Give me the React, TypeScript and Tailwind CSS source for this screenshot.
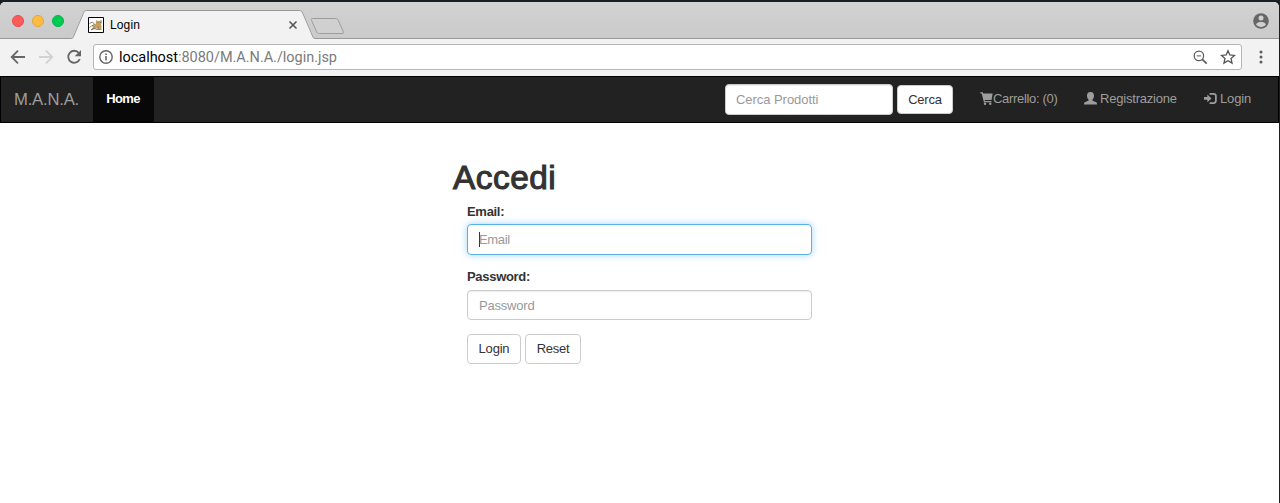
import React from "react";

function BrowserTabs() {
  return (
    <div className="relative h-[37px] w-full shrink-0 overflow-hidden rounded-t-[5px] bg-linear-to-b from-[#d2d2d2] to-[#cacaca]">
      <svg className="absolute inset-0" width="1280" height="37" viewBox="0 2 1280 37" fill="none">
        <path d="M0 38.5H71.5C73 38.5 73.5 37 74.3 35L83 14.5C84.3 11 84.8 10.5 86.5 10.5H299.5C301 10.5 301.8 11.4 302.6 13L312 35C313 37.4 313.5 38.5 315 38.5H1280V40H0Z" fill="none" stroke="#999" />
        <path d="M72 39C73.5 38.5 74 37 74.8 35L83.5 14.5C84.5 11.5 85 11 86.5 11H299.5C301 11 301.5 12 302.2 13.2L311.6 35.2C312.7 37.8 313 39 315 39Z" fill="#f2f2f2" />
        <path d="M312.3 18.5H335.5C337 18.5 337.6 19 338.2 20.2L343.1 31.2C343.9 33 343.5 33.5 342 33.5H319.5C317.8 33.5 317.1 33 316.4 31.4L311.6 20.5C311 19.2 311.2 18.5 312.3 18.5Z" fill="#d0d0d0" stroke="#9d9d9d" />
      </svg>
      <div className="relative flex h-full items-center pl-3">
        <div className="flex gap-2">
          <span className="size-3 rounded-full border-[0.5px] border-[#e94b4a] bg-[#fc5b57]" />
          <span className="size-3 rounded-full border-[0.5px] border-[#e5a63a] bg-[#fdbc40]" />
          <span className="size-3 rounded-full border-[0.5px] border-[#00b844] bg-[#00ca4f]" />
        </div>
        <svg className="mt-[9px] ml-[24px]" width="16" height="16" viewBox="0 0 16 16">
          <path d="M.5.5h15v15H.5z" fill="#fff" stroke="#000" />
          <path d="M7.500 7 8.300 3l1.500 1 2-.2 1.700-1 .4 2.700-1 2 .8 1.700-.5 2.800h-3L8 11.500 5 13H2.500L5 10.500l-1-2z" fill="#c5a062" />
          <path d="M1.500 6.500 4.500 5l2 2.500L3.500 9l-2 1.500M3 13l3-2 2.500 1.500h5M9.500 5.500h1M12 5.500h1M9.500 10l1.500 1" fill="none" stroke="#6f6a62" strokeWidth=".8" />
        </svg>
        <span className="mt-[9px] ml-[6px] w-[176px] text-[12px] tracking-[0.12px] text-black">Login</span>
        <svg className="mt-[9px] ml-[2px]" width="10" height="10" viewBox="0 0 10 10">
          <path d="m1.500 1.500 7 7m0-7-7 7" stroke="#555" strokeWidth="1.600" />
        </svg>
      </div>
      <svg className="absolute top-[11px] left-[1253px]" width="16" height="16" viewBox="0 0 16 16">
        <circle cx="8" cy="8" r="7.800" fill="#666" />
        <circle cx="8" cy="5" r="2.500" fill="#d0d0d0" />
        <path d="M3 11.500C4 9.200 6 8.900 8 8.900s4 .3 5 2.600C11.900 13.100 10 14 8 14s-3.900-.9-5-2.500Z" fill="#d0d0d0" />
      </svg>
    </div>
  );
}

function Toolbar() {
  return (
    <div className="flex h-[37px] w-full shrink-0 items-center bg-[#f2f2f2] pb-px pl-[10px] font-['Roboto',sans-serif]">
      <svg width="16" height="16" viewBox="0 0 16 16" fill="none" stroke="#666" strokeWidth="1.800">
        <path d="M15 8H2M8 1.700 1.700 8 8 14.300" />
      </svg>
      <svg className="ml-3" width="16" height="16" viewBox="0 0 16 16" fill="none" stroke="#d2d2d2" strokeWidth="1.800">
        <path d="M1 8h13M8 1.700 14.300 8 8 14.300" />
      </svg>
      <svg className="ml-3" width="16" height="16" viewBox="0 0 16 16">
        <path d="M12.900 4A6 6 0 1 0 13.800 10" fill="none" stroke="#666" strokeWidth="1.800" />
        <path d="M15 1v6.300H8.700Z" fill="#666" />
      </svg>
      <div className="ml-[11px] flex h-[26px] w-[1149px] items-center rounded-[3px] border border-[#b5b5b5] bg-white">
        <svg className="ml-[5px]" width="14" height="14" viewBox="0 0 14 14">
          <circle cx="7" cy="7" r="6.200" fill="none" stroke="#666" strokeWidth="1.400" />
          <path d="M6.200 6h1.600v4.500H6.200zM6.200 3.400h1.600V5H6.200z" fill="#666" />
        </svg>
        <span className="ml-[6px] pt-[2px] text-[14.5px] tracking-[-0.03px] whitespace-nowrap text-[#7b7b7b]">
          <span className="text-black">localhost</span>:8080/M.A.N.A./login.jsp
        </span>
        <svg className="mr-[12px] ml-auto" width="15" height="15" viewBox="0 0 15 15" fill="none" stroke="#5d5d5d">
          <circle cx="5.900" cy="5.900" r="4.700" strokeWidth="1.300" />
          <path d="M3.700 5.900h4.400" strokeWidth="1" />
          <path d="m9.300 9.300 4.400 4.400" strokeWidth="1.700" />
        </svg>
        <svg className="mr-[5px]" width="16" height="16" viewBox="0 0 15 15" fill="none">
          <path d="m7.500 1.600 1.700 4 4.400.4-3.300 2.900 1 4.300-3.800-2.300-3.800 2.300 1-4.300L1.400 6l4.400-.4Z" stroke="#555" strokeWidth="1.200" />
        </svg>
      </div>
      <svg className="ml-[17px]" width="4" height="14" viewBox="0 0 4 14" fill="#5c5c5c">
        <circle cx="2" cy="2" r="1.500" />
        <circle cx="2" cy="7" r="1.500" />
        <circle cx="2" cy="12" r="1.500" />
      </svg>
    </div>
  );
}

function Navbar() {
  return (
    <nav className="flex h-[47px] w-full shrink-0 border border-black bg-[#222] text-[13px] text-[#9d9d9d]">
      <a className="flex w-[92px] items-center pl-[13px] text-[16.7px] tracking-[-0.22px]">
        <span>M.A.N.A.</span>
      </a>
      <a className="flex w-[61px] items-center justify-center bg-[#080808] font-bold tracking-[-0.6px] text-white">
        <span className="-mt-px -ml-px">Home</span>
      </a>
      <form className="ml-[571px] flex gap-1 pt-[7px]" onSubmit={(e) => e.preventDefault()}>
        <input
          className="h-[31px] w-[168px] rounded-[4px] border border-[#ccc] bg-white px-[10px] text-[13px] tracking-[-0.05px] shadow-[inset_0_1px_1px_rgba(0,0,0,0.075)] placeholder:text-[#999]"
          placeholder="Cerca Prodotti"
        />
        <button className="mt-px h-[29px] w-[56px] rounded-[4px] border border-[#ccc] bg-white tracking-[-0.2px] text-[#333]">Cerca</button>
      </form>
      <a className="ml-[27px] flex w-[77px] items-center pb-px">
        <svg className="mb-[2px] shrink-0" width="13" height="13" viewBox="0 0 13 13" fill="#9d9d9d">
          <path d="M.3.300h2.500l.5 1.300h9.400l-1.200 6.300H4.600l.3 1h6.500v1.300H3.900L1.700 1.600H.3Z" />
          <circle cx="5" cy="11.700" r="1.200" />
          <circle cx="10.300" cy="11.700" r="1.200" />
        </svg>
        <span className="tracking-[-0.32px] whitespace-nowrap">Carrello: (0)</span>
      </a>
      <a className="ml-[27px] flex w-[93px] items-center pb-px">
        <svg className="mb-[2px] shrink-0" width="13" height="13" viewBox="0 0 13 13" fill="#9d9d9d">
          <path d="M6.500 0C9 0 10 1.500 10 3.700c0 1.700-.7 3-1.600 3.900v1c1.200.7 3.100 1.200 4.100 1.900.5.400.5.900.5 2H0c0-1.100 0-1.600.5-2 1-.7 2.900-1.200 4.100-1.900v-1C3.700 6.700 3 5.400 3 3.700 3 1.500 4 0 6.500 0Z" />
        </svg>
        <span className="ml-[3px] tracking-[-0.2px] whitespace-nowrap">Registrazione</span>
      </a>
      <a className="ml-[27px] flex items-center pb-px">
        <svg className="mb-px shrink-0" width="13" height="13" viewBox="0 0 14 13">
          <path d="M0 4.900h3.600V2.300l4.500 4.100-4.500 4.100V7.900H0Z" fill="#9d9d9d" />
          <path d="M6 1.400h4.200c1.700 0 2.600.9 2.600 2.400v5.200c0 1.500-.9 2.400-2.600 2.400H6" fill="none" stroke="#9d9d9d" strokeWidth="1.900" />
        </svg>
        <span className="ml-[3px] tracking-[-0.15px]">Login</span>
      </a>
    </nav>
  );
}

function LoginForm() {
  return (
    <main className="ml-[453px] w-[359px] pt-[35px] text-[13px] text-[#333]">
      <h1 className="text-[33.4px] leading-[40px] tracking-[0.5px] [-webkit-text-stroke:1.1px_#333]">Accedi</h1>
      <form className="ml-[14px] flex flex-col" onSubmit={(e) => e.preventDefault()}>
        <label className="mt-[5px] h-[21px] leading-[18px] font-bold tracking-[-0.3px]">Email:</label>
        <div className="flex h-[31px] items-center rounded-[4px] border border-[#5cb0e6] bg-white pl-[11px] shadow-[inset_0_1px_1px_rgba(0,0,0,0.06),0_0_7px_rgba(102,185,240,0.6)]">
          <span className="h-[15px] w-px bg-[#333]" />
          <span className="-ml-px tracking-[-0.35px] text-[#999]">Email</span>
        </div>
        <label className="mt-[13px] h-[22px] leading-[18px] font-bold tracking-[-0.3px]">Password:</label>
        <input
          className="h-[30px] rounded-[4px] border border-[#ccc] px-[11px] text-[13px] tracking-[-0.2px] shadow-[inset_0_1px_1px_rgba(0,0,0,0.075)] placeholder:text-[#999]"
          placeholder="Password"
        />
        <div className="mt-[14px] flex gap-1">
          <button className="h-[30px] w-[54px] rounded-[4px] border border-[#ccc] bg-white tracking-[-0.2px]">Login</button>
          <button className="h-[30px] w-[56px] rounded-[4px] border border-[#ccc] bg-white tracking-[-0.3px]">Reset</button>
        </div>
      </form>
    </main>
  );
}

export default function App() {
  return (
    <div className="flex h-[503px] w-[1280px] overflow-hidden bg-[#181e23] pt-[2px] font-['Liberation_Sans',sans-serif]">
      <div className="flex w-[1279px] flex-col overflow-hidden rounded-t-[5px] bg-white">
        <BrowserTabs />
        <Toolbar />
        <Navbar />
        <LoginForm />
      </div>
    </div>
  );
}
